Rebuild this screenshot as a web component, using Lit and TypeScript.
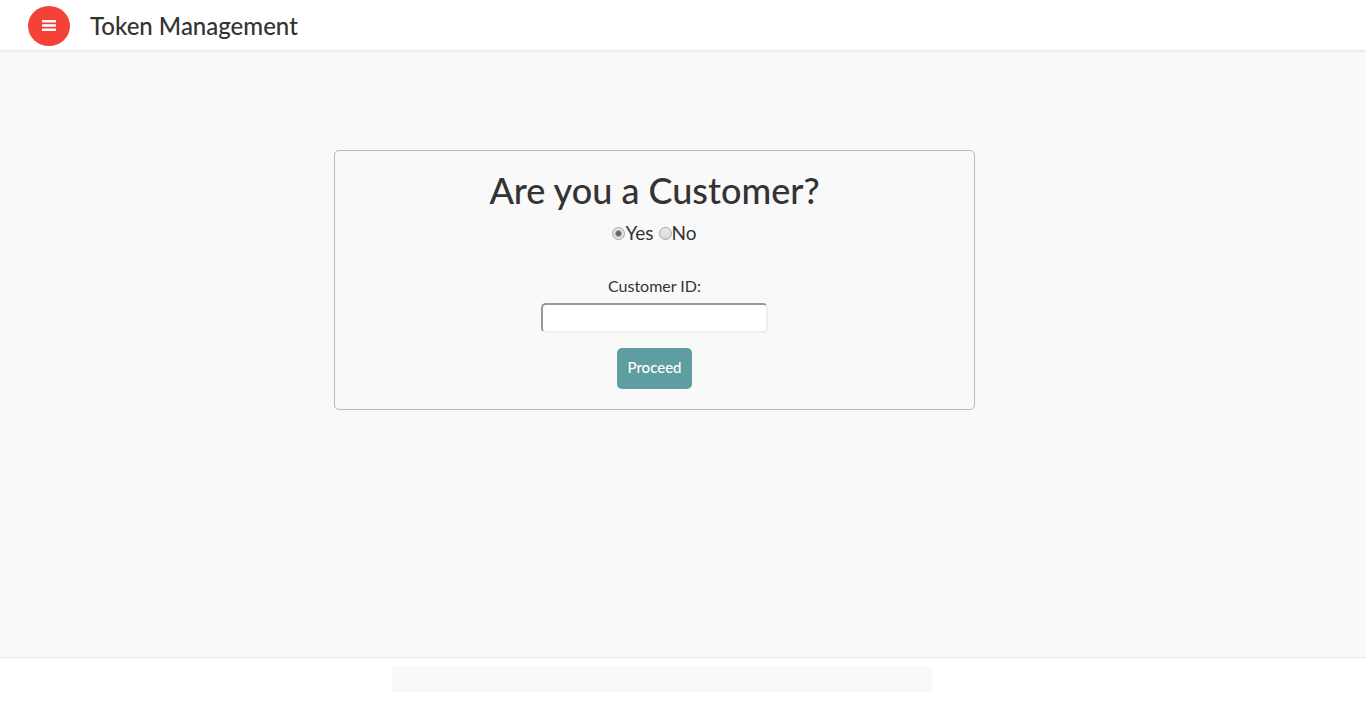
import { LitElement, html, css } from "lit";
import { customElement, state } from "lit/decorators.js";

@customElement("app-root")
export class AppRoot extends LitElement {
  static styles = css`
    :host {
      display: flex;
      flex-direction: column;
      min-height: 100vh;
      background: #f9f9f9;
      color: #333;
      font-family: Lato, "Open Sans", sans-serif;
      font-size: 16px;
      line-height: 20px;
    }
    * {
      box-sizing: border-box;
    }
    .header {
      display: flex;
      align-items: center;
      gap: 20px;
      height: 51px;
      padding: 2px 28px 0;
      background: #fff;
      border-bottom: 1px solid #e7e7e7;
      box-shadow: 0 1px 2px rgba(0, 0, 0, 0.04);
    }
    .menu {
      display: flex;
      align-items: center;
      justify-content: center;
      width: 42px;
      height: 40px;
      padding: 0 0 1px;
      border: 0;
      border-radius: 50%;
      background: #f44336;
      cursor: pointer;
    }
    .brand {
      margin: 0;
      font-size: 24px;
      font-weight: 500;
      line-height: 32px;
    }
    .main {
      flex: 1;
      display: flex;
      justify-content: center;
      align-items: flex-start;
      padding: 99px 57px 40px 0;
    }
    .card {
      display: flex;
      flex-direction: column;
      align-items: center;
      width: 100%;
      max-width: 641px;
      padding: 20px;
      border: 1px solid #bbb;
      border-radius: 5px;
    }
    .title {
      margin: 0;
      font-size: 36px;
      font-weight: 500;
      line-height: 38px;
    }
    .choices {
      display: flex;
      gap: 5px;
      margin: 12px 0 31px;
      padding: 0;
      border: 0;
      font-size: 19px;
      line-height: 24px;
    }
    .choice {
      display: flex;
      align-items: center;
    }
    .radio {
      appearance: none;
      width: 13px;
      height: 13px;
      margin: 0;
      border: 1px solid #a5a5a5;
      border-radius: 50%;
      background: linear-gradient(#e9e9e9, #d9d9d9);
    }
    .radio:checked {
      background: radial-gradient(circle, #666 2px, #e6e6e6 4px);
    }
    .field-label {
      margin-bottom: 7px;
    }
    .field {
      width: 227px;
      height: 30px;
      margin-bottom: 15px;
      padding: 2px 8px;
      border: 2px solid;
      border-color: #999 #eee #eee #999;
      border-radius: 5px;
      background: #fff;
      font: inherit;
    }
    .proceed {
      width: 75px;
      height: 41px;
      padding: 0 0 3px;
      border: 0;
      border-radius: 5px;
      background: #5f9ea0;
      color: #fff;
      font: inherit;
      font-size: 15px;
      font-weight: 500;
      cursor: pointer;
    }
    .footer {
      display: flex;
      justify-content: center;
      padding: 8px 42px 9px 0;
      background: #fff;
      border-top: 1px solid #e9e9e9;
    }
    .strip {
      width: 100%;
      max-width: 540px;
      height: 26px;
      background: #f9f9f9;
    }
  `;

  @state() private customer = true;

  render() {
    return html`
      <header class="header">
        <button class="menu" type="button" aria-label="Menu">
          <svg width="14" height="11" viewBox="0 0 14 11" fill="#fff" aria-hidden="true">
            <rect y="0" width="14" height="2.4" rx="0.5" />
            <rect y="4.3" width="14" height="2.4" rx="0.5" />
            <rect y="8.6" width="14" height="2.4" rx="0.5" />
          </svg>
        </button>
        <h1 class="brand">Token Management</h1>
      </header>
      <main class="main">
        <form class="card" @submit=${(e: Event) => e.preventDefault()}>
          <h2 class="title" id="question">Are you a Customer?</h2>
          <div class="choices" role="radiogroup" aria-labelledby="question">
            <label class="choice">
              <input class="radio" type="radio" name="customer" value="yes"
                .checked=${this.customer} @change=${() => (this.customer = true)} />Yes
            </label>
            <label class="choice">
              <input class="radio" type="radio" name="customer" value="no"
                .checked=${!this.customer} @change=${() => (this.customer = false)} />No
            </label>
          </div>
          <label class="field-label" for="customer-id">Customer ID:</label>
          <input class="field" id="customer-id" type="text" />
          <button class="proceed" type="submit">Proceed</button>
        </form>
      </main>
      <footer class="footer"><div class="strip"></div></footer>
    `;
  }
}
